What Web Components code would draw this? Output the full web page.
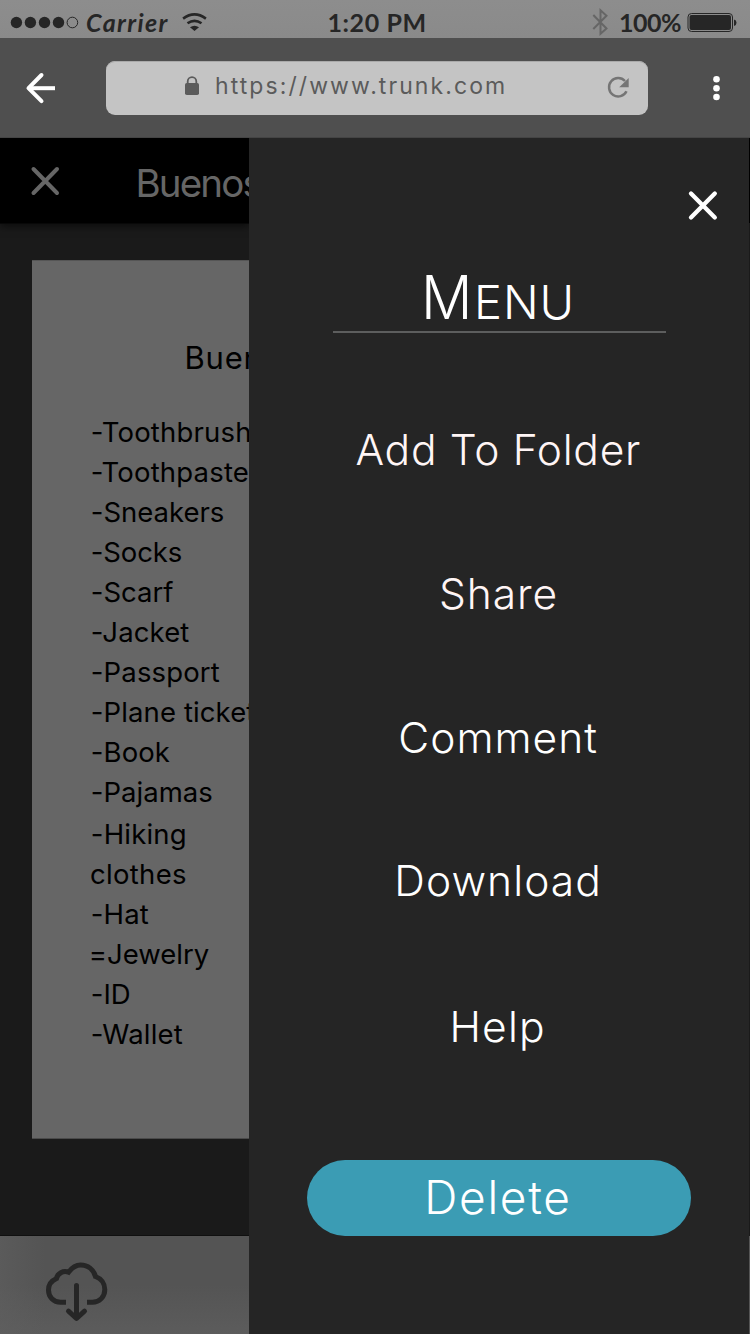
<!DOCTYPE html>
<html lang="en">
<head>
<meta charset="utf-8">
<title>Trunk</title>
<style>
html,body{margin:0;height:100%;background:#1a1a1a}
body{font-family:Inter,"Liberation Sans",sans-serif;overflow:hidden}
</style>
</head>
<body>
<trunk-app></trunk-app>
<script>
const define = (name, html) => customElements.define(name, class extends HTMLElement {
  connectedCallback() {
    if (this.shadowRoot) return;
    const t = document.createElement('template');
    t.innerHTML = html;
    this.attachShadow({mode: 'open'}).append(t.content.cloneNode(true));
  }
});

/* A line of text whose glyphs are tracked to fill a given width; a single glyph is scaled instead. */
const pen = document.createElement('canvas').getContext('2d');
customElements.define('tracked-text', class extends HTMLElement {
  connectedCallback() {
    if (this.shadowRoot) return;
    const g = (n, d) => this.getAttribute(n) ?? d;
    const text = g('text', ''), size = +g('size', 16), width = +g('width', 100);
    const family = g('family', 'Inter'), weight = g('weight', '400'), slant = g('slant', 'normal');
    pen.font = `${slant} ${weight} ${size}px "${family}"`;
    const m = pen.measureText(text);
    const natural = m.actualBoundingBoxLeft + m.actualBoundingBoxRight;
    const single = text.length < 2;
    const track = single ? 0 : (width - natural) / (text.length - 1);
    const scale = single ? width / natural : 1;
    this.attachShadow({mode: 'open'}).innerHTML = `<style>
      :host{display:block;flex:none;width:${width}px;white-space:pre;
        font:${slant} ${weight} ${size}px/${g('line', size)}px "${family}","Liberation Sans",sans-serif}
      span{display:block;width:max-content;margin-left:${m.actualBoundingBoxLeft * scale}px;letter-spacing:${track}px;
        ${single ? `transform:scaleX(${scale});transform-origin:0 0` : ''}}
      </style><span></span>`;
    this.shadowRoot.querySelector('span').textContent = text;
  }
});

define('status-bar', `<style>
:host{display:grid;grid-template-columns:328.5px 1fr 159.5px;height:38px;box-sizing:border-box;background:linear-gradient(#8d8d8d,#8a8a8a);color:#262626}
.g{display:flex;align-items:flex-start}
svg{display:block;flex:none}
tracked-text{margin-top:3px}
</style>
<div class="g">
<svg width="87" height="38"><g fill="#262626"><circle cx="16.4" cy="22.5" r="5.7"/><circle cx="30.4" cy="22.5" r="5.7"/><circle cx="44.5" cy="22.5" r="5.7"/><circle cx="58.5" cy="22.5" r="5.7"/></g><circle cx="72.4" cy="22.5" r="5.3" fill="none" stroke="#262626"/></svg>
<tracked-text text="Carrier" width="81.5" size="25" line="38" weight="700" slant="italic" family="Lato"></tracked-text>
<svg width="50" height="38" viewBox="168.500 0 50 38" fill="none" stroke="#262626" stroke-width="2.600"><path d="M182.600 18.600Q194 10.200 205.400 18.600M187 23.300Q194 18.300 201 23.300"/><path d="M189.500 27.200Q194 24.200 198.500 27.200L194 31Z" fill="#262626" stroke="none"/></svg>
</div>
<div class="g"><tracked-text text="1:20 PM" width="96" size="25" line="38" weight="700" family="Lato"></tracked-text></div>
<div class="g">
<svg width="29.500" height="38" viewBox="590.500 0 29.500 38" fill="none" stroke="#666" stroke-width="2"><path d="M592.800 15 606 28.500 600 33.800V10.200L606 15.800 592.800 29"/></svg>
<tracked-text text="100%" width="61" size="25" line="38" weight="700" family="Lato"></tracked-text>
<svg width="59" height="38" viewBox="681.500 0 59 38"><rect x="688.500" y="13.500" width="44.500" height="18" rx="3.500" fill="none" stroke="#262626"/><rect x="690" y="15" width="41.500" height="15" rx="2" fill="#262626"/><path d="M734.500 19.500q2.500 .5 2.500 3.200t-2.500 3.200z" fill="#262626"/></svg>
</div>`);

define('address-bar', `<style>
:host{display:flex;height:100px;box-sizing:border-box;background:#4f4f4f;border-bottom:1px solid #444}
svg{display:block;flex:none}
.f{display:flex;width:542px;height:54px;margin-top:23px;border-radius:9px;background:#c4c4c4;color:#5b5b5b;box-shadow:inset 0 1px #aaa}
tracked-text{margin-top:-2px}
</style>
<svg width="106" height="99" viewBox="0 38 106 99" fill="none" stroke="#fff" stroke-width="4"><path d="M28 88.200H55"/><path d="M41.500 75 28.500 88.200 41.500 101.200" stroke-linecap="round" stroke-linejoin="round"/></svg>
<div class="f">
<svg width="110" height="54" viewBox="106 61 110 54"><rect x="185" y="83" width="14" height="12" rx="1.800" fill="#5b5b5b"/><path d="M187.700 84V81.500a4.300 4.300 0 0 1 8.600 0V84" fill="none" stroke="#5b5b5b" stroke-width="1.800"/></svg>
<tracked-text text="https://www.trunk.com" width="288" size="23" line="54" weight="370"></tracked-text>
<svg width="143" height="54" viewBox="504 61 143 54"><path d="M625 81A9.200 9.200 0 1 0 626.500 91.300" fill="none" stroke="#757575" stroke-width="2.500"/><path d="M628.700 78V87.300H619.200Z" fill="#757575"/></svg>
</div>
<svg width="102" height="99" viewBox="648 38 102 99" fill="#fff"><circle cx="716.500" cy="79.300" r="3.300"/><circle cx="716.500" cy="88.200" r="3.300"/><circle cx="716.500" cy="97" r="3.300"/></svg>`);

define('note-header', `<style>
:host{display:flex;height:86px;background:#000;color:#666;box-shadow:0 2px 8px #0009;position:relative;border-bottom:1px solid #080808;box-sizing:border-box}
svg{display:block;flex:none}
tracked-text{margin-top:3px}
</style>
<svg width="138.500" height="84" viewBox="0 138 138.500 84"><path d="M33.500 169 57 193M57 169 33.500 193" stroke="#666" stroke-width="4" stroke-linecap="round"/></svg>
<tracked-text text="Buenos" width="123" size="38.500" line="84" weight="370"></tracked-text>`);

define('packing-note', `<style>
:host{display:block;width:600px;height:879px;margin:36px 0 0 32px;box-sizing:border-box;background:#666;color:#000;padding-top:78px;box-shadow:inset 0 1px #555,inset 0 -1px #4a4a4a}
.t{margin-left:154.500px}
.l{margin:34.400px 0 0 59.800px}
.l+.l{margin-top:2px}
.c{margin-left:-.8px}
</style>
<tracked-text class="t" text="Buen" width="73" size="31" line="40" weight="370"></tracked-text>
<div class="l">
<tracked-text text="-Toothbrush" width="158.500" size="27.500" line="40"></tracked-text>
<tracked-text text="-Toothpaste" width="156" size="27.500" line="40"></tracked-text>
<tracked-text text="-Sneakers" width="132" size="27.500" line="40"></tracked-text>
<tracked-text text="-Socks" width="90" size="27.500" line="40"></tracked-text>
<tracked-text text="-Scarf" width="81.500" size="27.500" line="40"></tracked-text>
<tracked-text text="-Jacket" width="97.500" size="27.500" line="40"></tracked-text>
<tracked-text text="-Passport" width="128" size="27.500" line="40"></tracked-text>
<tracked-text text="-Plane ticket" width="163.500" size="27.500" line="40"></tracked-text>
<tracked-text text="-Book" width="78" size="27.500" line="40"></tracked-text>
<tracked-text text="-Pajamas" width="120.500" size="27.500" line="40"></tracked-text>
</div><div class="l">
<tracked-text text="-Hiking" width="93" size="27.500" line="40"></tracked-text>
<tracked-text class="c" text="clothes" width="95" size="27.500" line="40"></tracked-text>
<tracked-text text="-Hat" width="57" size="27.500" line="40"></tracked-text>
<tracked-text text="=Jewelry" width="117" size="27.500" line="40"></tracked-text>
<tracked-text text="-ID" width="38" size="27.500" line="40"></tracked-text>
<tracked-text text="-Wallet" width="91" size="27.500" line="40"></tracked-text>
</div>`);

define('tool-bar', `<style>
:host{display:block;height:98px;margin-top:auto;background:linear-gradient(90deg,#6060608c,#55555500 45px),linear-gradient(#545454,#545454 50%,#5c5c5c);box-shadow:0 -1px #101010}
svg{display:block}
</style>
<svg width="130" height="98" viewBox="0 1236 130 98" fill="none" stroke="#262626" stroke-width="5"><path d="M66 1302.300H60.500C53.500 1302.300 48.500 1297 48.500 1290C48.500 1284.500 52 1280.500 56.500 1278.500C57.500 1273.500 63 1270.300 68.500 1272.200C72.500 1267 76 1265 80.500 1265C88 1265 93.500 1269.500 95.500 1276.500C101 1278.500 104.800 1283.500 104.800 1289.500C104.800 1296.800 99.500 1302.300 92.500 1302.300H87"/><path d="M76.500 1285.500V1317M68.500 1311.200 76.500 1318.500 84.500 1311.200" stroke-linecap="round" stroke-linejoin="round"/></svg>`);

define('note-page', `<style>
:host{display:flex;flex-direction:column;min-width:0;overflow:hidden;background:#1a1a1a}
</style><note-header></note-header><packing-note></packing-note><tool-bar></tool-bar>`);

define('menu-drawer', `<style>
:host{display:flex;flex-direction:column;align-items:center;background:#252525;color:#fff}
.x{display:flex;align-self:flex-end;height:124px}
h1{display:flex;justify-content:center;align-items:baseline;gap:10.700px;width:331px;height:69px;margin:0;padding-right:2px;border-bottom:2px solid #5d5e5e}
nav{display:flex;flex-direction:column;align-items:center;gap:84px;margin-top:87px;padding-right:1.500px}
.d{margin-top:-1px}
.h{margin-top:2px}
.p{color:#fff5f5}
button{all:unset;display:flex;justify-content:center;box-sizing:border-box;width:384px;height:76px;margin-top:103.300px;padding-right:1.500px;border-radius:38px;background:#3b9cb4;color:#fff}
button tracked-text{margin-top:-1.700px}
</style>
<svg class="x" width="80" height="124" viewBox="669 138 80 124"><path d="M691 193.500 714.800 217.500M714.800 193.500 691 217.500" stroke="#fff" stroke-width="4.300" stroke-linecap="round"/></svg>
<h1><tracked-text text="M" width="41.900" size="60" line="70" weight="300"></tracked-text><tracked-text text="ENU" width="92.400" size="47" line="40" weight="300"></tracked-text></h1>
<nav>
<tracked-text class="p" text="Add To Folder" width="283.500" size="42.500" line="60" weight="300"></tracked-text>
<tracked-text class="p" text="Share" width="114.500" size="42.500" line="60" weight="300"></tracked-text>
<tracked-text text="Comment" width="196" size="42.500" line="60" weight="300"></tracked-text>
<tracked-text class="d" text="Download" width="200" size="42.500" line="60" weight="300"></tracked-text>
<tracked-text class="h" text="Help" width="89.500" size="42.500" line="60" weight="300"></tracked-text>
</nav>
<button><tracked-text text="Delete" width="140" size="46" line="76" weight="300"></tracked-text></button>`);

define('trunk-app', `<style>
:host{display:grid;grid-template:38px 100px 1196px / 249px 500px 1px;width:750px;height:1334px;overflow:hidden}
status-bar,address-bar{grid-column:1/-1}
.e{background:linear-gradient(#000 85px,#1a1a1a 85px,#1a1a1a 1098px,#555 1098px)}
</style><status-bar></status-bar><address-bar></address-bar><note-page></note-page><menu-drawer></menu-drawer><div class="e"></div>`);
</script>
</body>
</html>
